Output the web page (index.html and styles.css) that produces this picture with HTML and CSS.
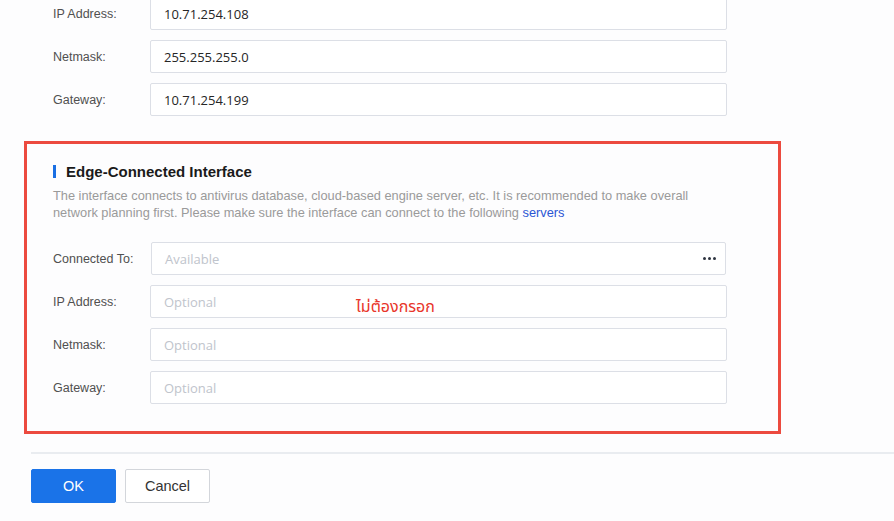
FILE: index.html
```html
<!DOCTYPE html>
<html>
<head>
<meta charset="utf-8">
<link rel="stylesheet" href="styles.css">
</head>
<body>
<div class="page">
  <div class="form top-form">
    <div class="row">
      <label class="lbl">IP Address:</label>
      <div class="field"><span class="val">10.71.254.108</span></div>
    </div>
    <div class="row">
      <label class="lbl">Netmask:</label>
      <div class="field"><span class="val">255.255.255.0</span></div>
    </div>
    <div class="row">
      <label class="lbl">Gateway:</label>
      <div class="field"><span class="val">10.71.254.199</span></div>
    </div>
  </div>

  <div class="section">
    <div class="title"><span class="bar"></span>Edge-Connected Interface</div>
    <p class="desc">The interface connects to antivirus database, cloud-based engine server, etc. It is recommended to make overall network planning first. Please make sure the interface can connect to the following <a class="link">servers</a></p>
    <div class="form inner-form">
      <div class="row">
        <label class="lbl">Connected To:</label>
        <div class="field select"><span class="ph">Available</span><span class="dots"><i></i><i></i><i></i></span></div>
      </div>
      <div class="row">
        <label class="lbl">IP Address:</label>
        <div class="field"><span class="ph">Optional</span><span class="note">ไม่ต้องกรอก</span></div>
      </div>
      <div class="row">
        <label class="lbl">Netmask:</label>
        <div class="field"><span class="ph">Optional</span></div>
      </div>
      <div class="row">
        <label class="lbl">Gateway:</label>
        <div class="field"><span class="ph">Optional</span></div>
      </div>
    </div>
  </div>

  <div class="footer">
    <button class="btn primary">OK</button>
    <button class="btn">Cancel</button>
  </div>
</div>
</body>
</html>
```

FILE: styles.css
```css
* { box-sizing: border-box; }
html, body { margin: 0; padding: 0; background: #fdfdfe; }
body { font-family: "Liberation Sans", Arial, sans-serif; width: 894px; height: 521px; overflow: hidden; }

.page { padding-top: 0; }

.form { display: flex; flex-direction: column; gap: 10px; }
.top-form { margin-top: -3px; padding-left: 53px; }

.row { display: flex; align-items: center; height: 33px; }
.lbl { width: 97px; font-size: 12.5px; color: #505050; }
.field {
  position: relative;
  width: 577px; height: 33px;
  border: 1px solid #dcdfe6; border-radius: 2px; background: #fff;
  display: flex; align-items: center; padding-left: 13px;
  font-family: "Open Sans", "Noto Sans", sans-serif; font-size: 13px;
}
.val { color: #262626; }
.ph { color: #c0c4cc; }
.select { margin-left: 1px; width: 575px; }

.dots { margin-left: auto; margin-right: 9px; display: flex; gap: 2px; }
.dots i { width: 3px; height: 3px; border-radius: 50%; background: #2e3440; display: block; }

.note {
  position: absolute; left: 205px; top: 9px;
  color: #e8352a; font-size: 16px;
  font-family: "Noto Sans Thai", "Noto Sans", "DejaVu Sans", sans-serif;
}

.section {
  margin: 25px 0 0 24px; width: 757px;
  border: 3px solid #ec4a3f;
  padding: 17px 0 27px 26px;
}
.title {
  display: flex; align-items: center; height: 20px;
  font-size: 15px; font-weight: bold; color: #1a1a1a;
}
.bar { width: 3px; height: 13px; background: #1a6fe3; margin-right: 10px; }
.desc {
  margin: 6px 0 0 0; width: 660px;
  font-size: 12.8px; line-height: 17px; color: #9a9a9a;
}
.link { color: #2a55d4; }
.inner-form { margin-top: 21px; }

.footer {
  margin: 18px 0 0 31px;
  border-top: 2px solid #e9ecf0;
  padding-top: 15px;
  display: flex; gap: 9px;
}
.btn {
  width: 85px; height: 34px;
  border: 1px solid #d3d6db; border-radius: 2px; background: #fff;
  font-family: "Liberation Sans", Arial, sans-serif; font-size: 14.5px; color: #333;
}
.btn.primary { background: #1a73e8; border-color: #1a73e8; color: #fff; }
```
